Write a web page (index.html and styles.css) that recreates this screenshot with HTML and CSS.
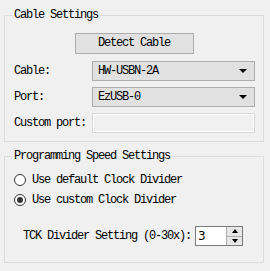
FILE: index.html
```html
<!DOCTYPE html>
<html lang="en">
<head>
  <meta charset="UTF-8">
  <title>Cable Settings</title>
<link rel="stylesheet" href="styles.css">
</head>
<body>

  <!-- Cable group -->
  <fieldset class="group">
    <legend>Cable Settings</legend>
    <div class="detect-row">
      <button class="btn">Detect Cable</button>
    </div>
    <div class="form-grid">
      <label>Cable:</label>
      <div class="combo">HW-USBN-2A<span class="arrow"></span></div>

      <label>Port:</label>
      <div class="combo">EzUSB-0<span class="arrow"></span></div>

      <label>Custom port:</label>
      <div class="text-box disabled"></div>
    </div>
  </fieldset>

  <!-- Speed group -->
  <fieldset class="group speed">
    <legend>Programming Speed Settings</legend>
    <div class="radio-row first">
      <span class="radio"></span>
      <span>Use default Clock Divider</span>
    </div>
    <div class="radio-row">
      <span class="radio checked"></span>
      <span>Use custom Clock Divider</span>
    </div>
    <div class="divider-row">
      <span>TCK Divider Setting (0-30x):</span>
      <div class="spin">
        <span class="spin-value">3</span>
        <span class="spin-btns">
          <span class="spin-up"></span>
          <span class="spin-down"></span>
        </span>
      </div>
    </div>
  </fieldset>

  <fieldset class="group next">
    <legend>Debug Settings</legend>
  </fieldset>

</body>
</html>
```
FILE: styles.css
```css
/* Dialog base */
html, body {
  height: 100%;
  overflow: hidden;
}

body {
  margin: 0;
  padding-top: 9px;
  background: #f0f0f0;
  color: #000;
  font-family: 'Liberation Mono', 'DejaVu Sans Mono', monospace;
  font-size: 12px;
  letter-spacing: -1.2px;
  line-height: 13px;
}

/* Group boxes */
.group {
  margin: 0 6px 0 4px;
  padding: 0 8px 8px 9px;
  border: 1px solid #dcdcdc;
  min-inline-size: 0;
}

.group legend {
  padding: 0 2px;
  margin-left: -2px;
  line-height: 13px;
}

.speed {
  margin-top: 8px;
  padding-bottom: 16px;
}

.next {
  margin-top: 8px;
  height: 30px;
}

/* Detect button */
.detect-row {
  display: flex;
  justify-content: center;
  margin-top: 11px;
  padding-right: 1px;
}

.btn {
  width: 119px;
  height: 21px;
  padding: 0;
  background: #e1e1e1;
  border: 1px solid #adadad;
  font: inherit;
  letter-spacing: inherit;
  color: #000;
}

/* Label / field grid */
.form-grid {
  display: grid;
  grid-template-columns: 78px 1fr;
  row-gap: 6px;
  margin-top: 7px;
  align-items: center;
}

.combo {
  position: relative;
  height: 18px;
  line-height: 18px;
  padding-left: 5px;
  background: #e1e1e1;
  border: 1px solid #adadad;
}

.arrow {
  position: absolute;
  right: 7px;
  top: 7px;
  width: 0;
  height: 0;
  border-left: 4px solid transparent;
  border-right: 4px solid transparent;
  border-top: 4px solid #000;
}

.text-box {
  height: 18px;
  border: 1px solid #d9d9d9;
  box-shadow: inset 0 0 0 1px #fff;
}

.text-box.disabled {
  background: #f0f0f0;
}

/* Radio options */
.radio-row {
  display: flex;
  align-items: center;
  gap: 6px;
  height: 16px;
  margin-top: 4px;
}

.radio-row.first {
  margin-top: 9px;
}

.radio {
  box-sizing: border-box;
  width: 12px;
  height: 12px;
  border: 1px solid #333;
  border-radius: 50%;
  background: #fff;
  display: flex;
  align-items: center;
  justify-content: center;
}

.radio.checked::after {
  content: "";
  width: 6px;
  height: 6px;
  border-radius: 50%;
  background: #333;
}

/* Divider spin box */
.divider-row {
  display: flex;
  align-items: center;
  gap: 4px;
  margin-top: 18px;
  padding-left: 9px;
}

.spin {
  display: flex;
  width: 46px;
  height: 18px;
  border: 1px solid #7a7a7a;
  background: #fff;
}

.spin-value {
  flex: 1;
  padding-left: 2px;
  font-family: 'DejaVu Sans', 'Liberation Sans', sans-serif;
  font-size: 12px;
  letter-spacing: 0;
  line-height: 18px;
}

.spin-btns {
  display: flex;
  flex-direction: column;
  width: 15px;
  border-left: 1px solid #adadad;
}

.spin-up, .spin-down {
  flex: 1;
  display: flex;
  align-items: center;
  justify-content: center;
  background: #e6e6e6;
}

.spin-up {
  border-bottom: 1px solid #adadad;
}

.spin-up::after {
  content: "";
  border-left: 3px solid transparent;
  border-right: 3px solid transparent;
  border-bottom: 4px solid #000;
}

.spin-down::after {
  content: "";
  border-left: 3px solid transparent;
  border-right: 3px solid transparent;
  border-top: 4px solid #000;
}
```
